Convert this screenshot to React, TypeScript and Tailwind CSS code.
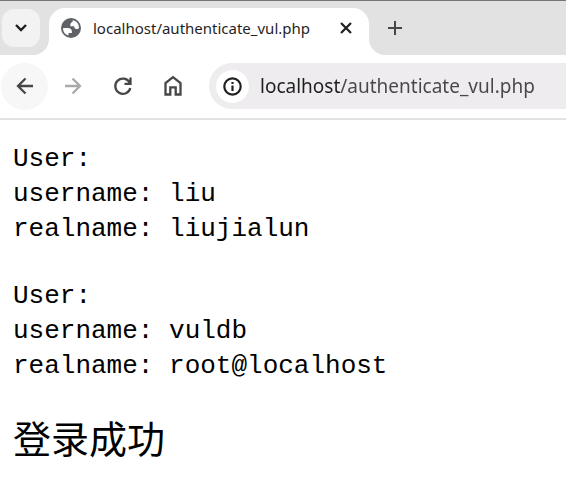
import React from "react";

function TabStrip() {
  return (
    <header className="flex h-[55px] items-start border-t border-[#777377] bg-[#e2e2e2]">
      <button aria-label="Search tabs" className="ml-0.5 mt-2 flex size-[38px] shrink-0 items-center justify-center rounded-xl bg-[#f2f2f2]">
        <svg width="14" height="10" viewBox="0 0 14 10" fill="none" stroke="#1f1f1f" strokeWidth="2.4">
          <path d="M2 2l5 5 5-5" />
        </svg>
      </button>
      <div className="relative ml-[9px] mt-[7px] flex h-[47px] w-80 shrink-0 items-start rounded-t-2xl bg-white pl-2.5 pr-3">
        <svg className="absolute bottom-0 right-full" width="16" height="16" viewBox="0 0 16 16" fill="#fff">
          <path d="M16 0v16H0A16 16 0 0 0 16 0z" />
        </svg>
        <svg className="absolute bottom-0 left-full" width="16" height="16" viewBox="0 0 16 16" fill="#fff">
          <path d="M0 0v16h16A16 16 0 0 1 0 0z" />
        </svg>
        <div className="flex h-10 w-full items-center">
          <svg width="24" height="24" viewBox="0 0 24 24">
            <circle cx="12" cy="12" r="10" fill="#5f6368" />
            <path
              fill="#fff"
              d="M4 12h4.400c3.400 0 4.900 1.700 4.500 5.100H9.500v2.500A8 8 0 0 1 4 12zM14 4.250A8 8 0 0 1 20 12c-.4.700-1.100 1-2 1-1.900 0-2.800-1-2.800-2.850h-3.800c-.3-2.200.4-3.550 2-4.100 0-.8.200-1.400.6-1.800z"
            />
          </svg>
          <span className="ml-2.5 grow whitespace-nowrap font-['Noto_Sans',sans-serif] text-[15px] text-[#1f1f1f]">localhost/authenticate_vul.php</span>
          <button aria-label="Close tab" className="-ml-2 flex size-[22px] items-center justify-center">
            <svg width="12" height="12" viewBox="0 0 12 12" stroke="#1f1f1f" strokeWidth="2.2">
              <path d="M1 1l10 10M11 1L1 11" />
            </svg>
          </button>
        </div>
      </div>
      <button aria-label="New tab" className="ml-4 mt-[17px] flex size-5 items-center justify-center">
        <svg width="14" height="14" viewBox="0 0 14 14" stroke="#474747" strokeWidth="2">
          <path d="M7 0v14M0 7h14" />
        </svg>
      </button>
    </header>
  );
}

function Toolbar() {
  return (
    <nav className="flex items-center border-b-2 border-[#e2e2e2] bg-white pb-2 pl-px pt-[7px]">
      <button aria-label="Back" className="flex size-[47px] shrink-0 items-center justify-center rounded-full bg-[#f7f7f7]">
        <svg width="24" height="24" viewBox="0 0 24 24" fill="none" stroke="#474747" strokeWidth="2.3">
          <path d="M20 12H5M12.500 4.500L5 12l7.500 7.500" />
        </svg>
      </button>
      <button aria-label="Forward" disabled className="ml-px flex size-12 shrink-0 items-center justify-center">
        <svg width="24" height="24" viewBox="0 0 24 24" fill="none" stroke="#aaaaaa" strokeWidth="2.3">
          <path d="M4 12h15M11.500 4.500L19 12l-7.500 7.500" />
        </svg>
      </button>
      <button aria-label="Reload" className="ml-0.5 flex size-12 shrink-0 items-center justify-center">
        <svg width="24" height="24" viewBox="0 0 24 24" fill="none" stroke="#474747" strokeWidth="2.3">
          <path d="M19.500 3.500v6.300H13.500M18.700 8.800A7.600 7.600 0 1 0 19.300 14" />
        </svg>
      </button>
      <button aria-label="Home" className="ml-0.5 flex size-12 shrink-0 items-center justify-center">
        <svg width="24" height="24" viewBox="0 0 24 24" fill="none" stroke="#474747" strokeWidth="2.3">
          <path d="M4.500 20.500V9L12 3.200 19.500 9v11.500h-4.800v-7.200H9.300v7.200z" />
        </svg>
      </button>
      <div className="ml-3 flex h-[46px] min-w-0 grow items-center rounded-l-full bg-[#eeecee] pl-[7px]">
        <button aria-label="View site information" className="flex size-[33px] shrink-0 items-center justify-center rounded-full bg-white">
          <svg width="19" height="19" viewBox="0 0 19 19" fill="none" stroke="#1f1f1f" strokeWidth="2.200">
            <circle cx="9.500" cy="9.500" r="8.200" />
            <path d="M9.500 8.500v5.500M9.500 5v2" />
          </svg>
        </button>
        <input
          aria-label="Address"
          defaultValue="localhost/authenticate_vul.php"
          className="ml-[11px] h-8 min-w-0 grow bg-[linear-gradient(to_right,#1f1f1f_81px,#474747_81px)] bg-clip-text font-['Noto_Sans',sans-serif] text-[19px] text-transparent outline-none"
        />
      </div>
    </nav>
  );
}

function Page() {
  return (
    <main className="px-[13px] pt-[22px] text-black">
      <pre className="font-['Liberation_Mono',monospace] text-[26px] leading-[35px]">{"User:\nusername: liu\nrealname: liujialun"}</pre>
      <pre className="mt-8 font-['Liberation_Mono',monospace] text-[26px] leading-[35px]">{"User:\nusername: vuldb\nrealname: root@localhost"}</pre>
      <p className="mt-7 font-['Noto_Sans_CJK_SC',sans-serif] text-[38px] leading-[50px]">登录成功</p>
    </main>
  );
}

export default function App() {
  return (
    <div className="min-h-screen bg-white">
      <TabStrip />
      <Toolbar />
      <Page />
    </div>
  );
}
